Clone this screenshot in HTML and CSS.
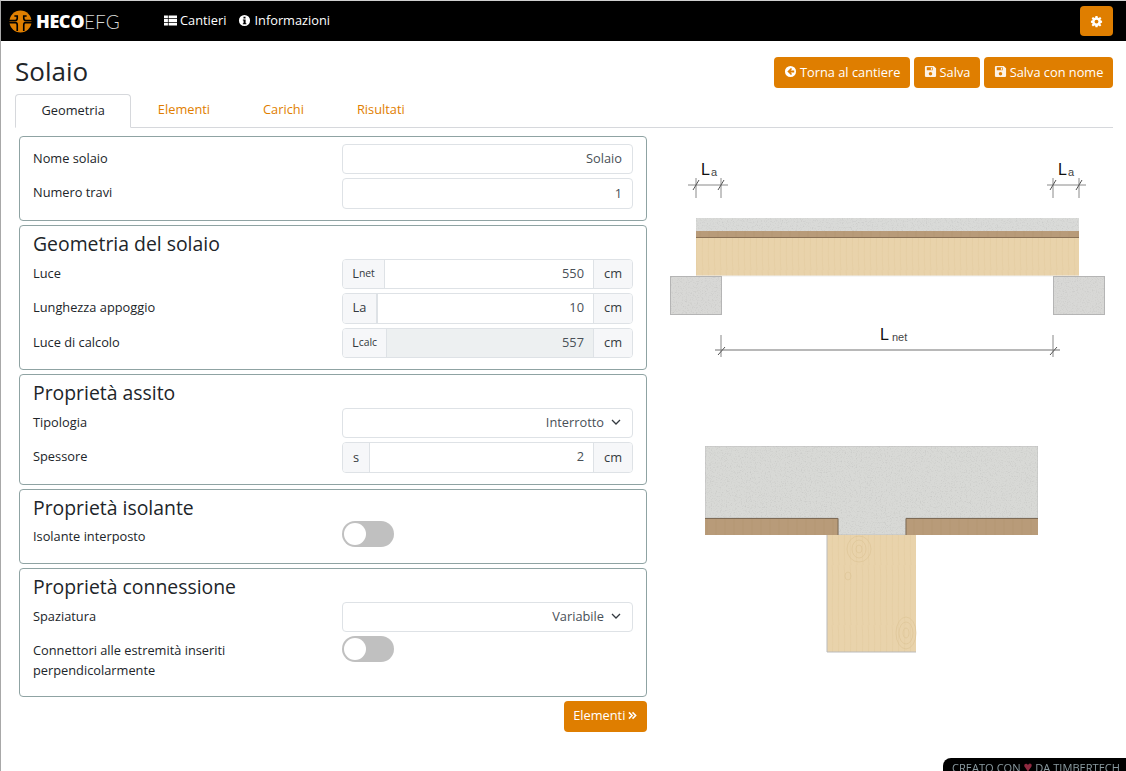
FILE: index.html
```html
<!DOCTYPE html>
<html lang="it">
<head>
    <meta charset="UTF-8">
    <title>Solaio</title>
    <link rel="stylesheet" href="styles.css">
</head>
<body>
    <svg class="defs" width="0" height="0">
        <defs>
            <filter id="grain" x="0" y="0" width="100%" height="100%">
                <feTurbulence type="fractalNoise" baseFrequency="0.8" numOctaves="2" seed="4"/>
                <feColorMatrix values="0 0 0 0 0.45  0 0 0 0 0.45  0 0 0 0 0.45  1.1 0 0 0 -0.55"/>
                <feComposite in2="SourceGraphic" operator="in"/>
                <feMerge><feMergeNode in="SourceGraphic"/><feMergeNode/></feMerge>
            </filter>
            <pattern id="wood" width="6" height="60" patternUnits="userSpaceOnUse">
                <rect width="6" height="60" fill="#e9d3ab"/>
                <path d="M2 0C4 15 1 40 3 60" fill="none" stroke="#e3cba0" stroke-width=".6"/>
            </pattern>
            <pattern id="board" width="9" height="20" patternUnits="userSpaceOnUse">
                <rect width="9" height="20" fill="#b89b79"/>
                <path d="M3 0V20" stroke="#b1936f" stroke-width=".7"/>
            </pattern>
        </defs>
    </svg>

    <nav class="navbar">
        <a class="brand">
            <svg class="logo" viewBox="0 0 24 24">
                <circle cx="12" cy="12" r="11.5" fill="#e07f00"/>
                <path d="M0 11H6.5Q8.6 11 8.6 8.6V6.2H5.6M18.4 6.2H15.4V8.6Q15.4 11 17.5 11H24M0 13.2H6.5Q8.6 13.2 8.6 15.6V22M24 13.2H17.5Q15.4 13.2 15.4 15.6V22" fill="none" stroke="#000" stroke-width="1.7"/>
            </svg>
            <span class="brand-bold">HECO</span><span class="brand-thin">EFG</span>
        </a>
        <a class="nav-link">
            <svg class="icon" viewBox="0 0 14 14"><path d="M0 1.5H4.2V4.6H0ZM5 1.5H14V4.6H5ZM0 5.4H4.2V8.5H0ZM5 5.4H14V8.5H5ZM0 9.3H4.2V12.4H0ZM5 9.3H14V12.4H5Z" fill="#fff"/></svg>
            Cantieri
        </a>
        <a class="nav-link">
            <svg class="icon" viewBox="0 0 14 14"><path fill-rule="evenodd" d="M7 1a6 6 0 1 0 0 12A6 6 0 0 0 7 1ZM5.9 2.9H8.1V4.8H5.9ZM5.2 5.8H8.2V9.9H9V11.1H5.2V9.9H6V7H5.2Z" fill="#fff"/></svg>
            Informazioni
        </a>
        <button class="btn btn-gear">
            <svg class="icon" viewBox="0 0 14 14"><path fill-rule="evenodd" d="M5.9 1H8.1L8.4 2.7 9.4 3.1 10.8 2.1 12.3 3.6 11.2 5 11.7 6 13 6.2V8.3L11.6 8.6 11.2 9.6 12.2 11 10.7 12.4 9.3 11.4 8.4 11.8 8.1 13.2H5.9L5.6 11.7 4.6 11.3 3.2 12.3 1.7 10.9 2.8 9.5 2.3 8.5 1 8.3V6.2L2.4 5.9 2.8 4.9 1.8 3.5 3.3 2.1 4.7 3.1 5.6 2.7ZM7 5A2.1 2.1 0 1 0 7 9.2 2.1 2.1 0 0 0 7 5Z" fill="#fff"/></svg>
        </button>
    </nav>

    <main class="page">
        <div class="title-row">
            <h1>Solaio</h1>
            <div class="actions">
                <button class="btn">
                    <svg class="icon" viewBox="0 0 14 14"><path fill-rule="evenodd" d="M7 1a6 6 0 1 0 0 12A6 6 0 0 0 7 1ZM7.5 3.2 8.7 4.4 7.1 5.9H11V8.1H7.1L8.7 9.6 7.5 10.8 3.6 7Z" fill="#fff"/></svg>
                    Torna al cantiere
                </button>
                <button class="btn">
                    <svg class="icon" viewBox="0 0 14 14"><path fill-rule="evenodd" d="M1 2.2Q1 1 2.2 1H10.4L13 3.6V11.8Q13 13 11.8 13H2.2Q1 13 1 11.8ZM3 2.4V5.6H9.4V2.4ZM7.4 2.9H8.7V5H7.4ZM7 7.6A1.9 1.9 0 1 0 7 11.4 1.9 1.9 0 0 0 7 7.6Z" fill="#fff" opacity=".9"/></svg>
                    Salva
                </button>
                <button class="btn">
                    <svg class="icon" viewBox="0 0 14 14"><path fill-rule="evenodd" d="M1 2.2Q1 1 2.2 1H10.4L13 3.6V11.8Q13 13 11.8 13H2.2Q1 13 1 11.8ZM3 2.4V5.6H9.4V2.4ZM7.4 2.9H8.7V5H7.4ZM7 7.6A1.9 1.9 0 1 0 7 11.4 1.9 1.9 0 0 0 7 7.6Z" fill="#fff" opacity=".9"/></svg>
                    Salva con nome
                </button>
            </div>
        </div>

        <ul class="tabs">
            <li class="tab active">Geometria</li>
            <li class="tab">Elementi</li>
            <li class="tab">Carichi</li>
            <li class="tab">Risultati</li>
        </ul>

        <div class="columns">
            <div class="form-col">
                <section class="card">
                    <div class="row">
                        <label>Nome solaio</label>
                        <div class="field">Solaio</div>
                    </div>
                    <div class="row">
                        <label>Numero travi</label>
                        <div class="field">1</div>
                    </div>
                </section>

                <section class="card">
                    <h2>Geometria del solaio</h2>
                    <div class="row">
                        <label>Luce</label>
                        <div class="group">
                            <span class="addon addon-net">L<sub>net</sub></span>
                            <div class="value">550</div>
                            <span class="addon addon-unit">cm</span>
                        </div>
                    </div>
                    <div class="row">
                        <label>Lunghezza appoggio</label>
                        <div class="group">
                            <span class="addon addon-la">La</span>
                            <div class="value">10</div>
                            <span class="addon addon-unit">cm</span>
                        </div>
                    </div>
                    <div class="row">
                        <label>Luce di calcolo</label>
                        <div class="group">
                            <span class="addon addon-calc">L<sub>calc</sub></span>
                            <div class="value readonly">557</div>
                            <span class="addon addon-unit">cm</span>
                        </div>
                    </div>
                </section>

                <section class="card">
                    <h2>Proprietà assito</h2>
                    <div class="row">
                        <label>Tipologia</label>
                        <div class="field select">
                            Interrotto
                            <svg class="chevron" viewBox="0 0 10 6"><path d="M1 1 5 5 9 1" fill="none" stroke="#343a40" stroke-width="1.3"/></svg>
                        </div>
                    </div>
                    <div class="row">
                        <label>Spessore</label>
                        <div class="group">
                            <span class="addon addon-s">s</span>
                            <div class="value">2</div>
                            <span class="addon addon-unit">cm</span>
                        </div>
                    </div>
                </section>

                <section class="card">
                    <h2>Proprietà isolante</h2>
                    <div class="row row-toggle">
                        <label>Isolante interposto</label>
                        <div class="toggle"></div>
                    </div>
                </section>

                <section class="card">
                    <h2>Proprietà connessione</h2>
                    <div class="row">
                        <label>Spaziatura</label>
                        <div class="field select">
                            Variabile
                            <svg class="chevron" viewBox="0 0 10 6"><path d="M1 1 5 5 9 1" fill="none" stroke="#343a40" stroke-width="1.3"/></svg>
                        </div>
                    </div>
                    <div class="row row-tall">
                        <label class="label-wide">Connettori alle estremità inseriti perpendicolarmente</label>
                        <div class="toggle"></div>
                    </div>
                </section>

                <div class="next">
                    <button class="btn">
                        Elementi
                        <svg class="icon icon-small" viewBox="0 0 10 10"><path d="M1 1.5 4.5 5 1 8.5M5 1.5 8.5 5 5 8.5" fill="none" stroke="#fff" stroke-width="1.7"/></svg>
                    </button>
                </div>
            </div>

            <div class="drawings">
                <svg class="drawing-side" viewBox="0 0 445 220" width="445" height="220">
                    <g fill="none" stroke="#8a8a8a" stroke-width="1">
                        <path d="M18 35H58M26 28V48M51 28V48M377 35H416M383 28V48M409 28V48"/>
                        <path d="M23 40 29 30M48 40 54 30M380 40 386 30M406 40 412 30" stroke="#555"/>
                        <path d="M45 200H390" stroke="#a0a0a0" stroke-width="1.5"/>
                        <path d="M51 185V207M383 185V207" stroke="#888"/>
                        <path d="M48 205 55 197M380 205 387 197" stroke="#555"/>
                    </g>
                    <rect x="26" y="68" width="383" height="13" fill="#d9dad8" filter="url(#grain)"/>
                    <rect x="26" y="81" width="383" height="7" fill="url(#board)"/>
                    <path d="M26 87.5H409" stroke="#8a7155"/>
                    <rect x="26" y="88" width="383" height="38" fill="url(#wood)"/>
                    <path d="M26 126H409" stroke="#eee"/>
                    <rect x="0.5" y="126.5" width="51" height="38" fill="#d8d8d6" stroke="#b5b5b5" filter="url(#grain)"/>
                    <rect x="383.5" y="126.5" width="51" height="38" fill="#d8d8d6" stroke="#b5b5b5" filter="url(#grain)"/>
                    <text class="dim" x="31" y="25">L<tspan class="dim-sub" dx="1" dy="1">a</tspan></text>
                    <text class="dim" x="388" y="25">L<tspan class="dim-sub" dx="1" dy="1">a</tspan></text>
                    <text class="dim" x="210" y="190">L<tspan class="dim-sub" dx="3" dy="1">net</tspan></text>
                </svg>

                <svg class="drawing-section" viewBox="0 0 335 210" width="335" height="210">
                    <path d="M1 1H334V73H202V90H134V73H1Z" fill="#d8d9d6" stroke="#c0c0c0" filter="url(#grain)"/>
                    <rect x="1" y="73" width="133" height="17" fill="url(#board)"/>
                    <rect x="202" y="73" width="132" height="17" fill="url(#board)"/>
                    <path d="M1 73.5H134V90M202 90V73.5H334" fill="none" stroke="#7d6a55"/>
                    <rect x="123" y="90" width="89" height="117" fill="url(#wood)"/>
                    <g fill="none" stroke="#dcc293" stroke-width=".6">
                        <ellipse cx="155" cy="104" rx="3" ry="4"/>
                        <ellipse cx="155" cy="104" rx="7" ry="9"/>
                        <ellipse cx="155" cy="104" rx="12" ry="13"/>
                        <ellipse cx="144" cy="131" rx="3" ry="4"/>
                        <ellipse cx="202" cy="188" rx="3" ry="5"/>
                        <ellipse cx="202" cy="188" rx="7" ry="11"/>
                        <ellipse cx="202" cy="188" rx="10" ry="16"/>
                    </g>
                    <path d="M123 90V207H212" fill="none" stroke="#bbb"/>
                </svg>
            </div>
        </div>
    </main>

    <div class="credit">CREATO CON <span class="heart">♥</span> DA TIMBERTECH</div>
</body>
</html>
```

FILE: styles.css
```css
html, body {
    margin: 0;
    padding: 0;
}

body {
    height: 770px;
    overflow: hidden;
    background-color: #fff;
    color: #212529;
    font-family: "Open Sans", "Liberation Sans", sans-serif;
    font-size: 12.8px;
    border-top: 1px solid #d0d0d0;
    border-left: 1px solid #a8a8a8;
}

.defs {
    position: absolute;
}

.navbar {
    display: flex;
    align-items: center;
    height: 40px;
    padding: 0 13px 0 8px;
    background-color: #000;
    box-sizing: border-box;
}

.brand {
    display: flex;
    align-items: center;
    width: 155px;
    color: #fff;
}

.logo {
    width: 23px;
    height: 23px;
    margin-right: 4px;
}

.brand-bold {
    font-weight: 800;
    font-size: 18px;
    letter-spacing: -0.4px;
}

.brand-thin {
    font-family: "Lato", sans-serif;
    font-weight: 300;
    font-size: 19px;
    color: #d8d8d8;
}

.nav-link {
    display: flex;
    align-items: center;
    gap: 3px;
    margin-right: 12px;
    padding-bottom: 2px;
    color: #fff;
    font-size: 12.8px;
}

.icon {
    width: 13px;
    height: 13px;
    flex: none;
}

.icon-small {
    width: 9px;
    height: 9px;
}

.btn {
    display: inline-flex;
    align-items: center;
    gap: 3px;
    height: 31px;
    padding: 0 9.6px 2px;
    border: none;
    border-radius: 4px;
    background-color: #df7e00;
    color: #fff;
    font-family: inherit;
    font-size: 12.8px;
}

.btn-gear {
    width: 33px;
    height: 30px;
    justify-content: center;
    padding: 0;
    margin-left: auto;
}

.page {
    padding: 0 13px 0 14px;
}

.title-row {
    display: flex;
    justify-content: space-between;
    align-items: flex-start;
    height: 53px;
    padding-top: 16px;
    box-sizing: border-box;
}

h1 {
    margin: 0;
    font-size: 26px;
    font-weight: 400;
    line-height: 28px;
}

.actions {
    display: flex;
    gap: 4px;
}

.tabs {
    display: flex;
    margin: 0;
    padding: 0;
    list-style: none;
    height: 34px;
    border-bottom: 1px solid #d6d8dc;
    box-sizing: border-box;
}

.tab {
    padding: 0 26.5px;
    line-height: 31px;
    color: #df7e00;
}

.tab.active {
    height: 34px;
    padding: 0 25.5px;
    box-sizing: border-box;
    border: 1px solid #d6d8dc;
    border-bottom-color: #fff;
    border-radius: 4px 4px 0 0;
    line-height: 30px;
    color: #212529;
}

.columns {
    display: flex;
    padding-top: 8px;
}

.form-col {
    width: 628px;
    margin-left: 4px;
    display: flex;
    flex-direction: column;
    gap: 4px;
}

.card {
    padding: 7px 13px;
    border: 1px solid #8fa3a3;
    border-radius: 4px;
}

h2 {
    margin: 0 0 5px;
    font-size: 19.4px;
    font-weight: 400;
    line-height: 21px;
}

.row {
    display: grid;
    grid-template-columns: 309px 291px;
    margin-bottom: 4px;
}

.row label {
    line-height: 28px;
}

.row-toggle {
    margin-top: -1.5px;
    min-height: 30.5px;
}

.row-toggle label {
    line-height: 30px;
}

.row-tall {
    min-height: 48.5px;
}

.row .label-wide {
    width: 230px;
    margin-top: 4px;
    line-height: 20px;
}

.field, .group {
    height: 30.4px;
    box-sizing: border-box;
    border: 1px solid #dee2e6;
    border-radius: 4px;
}

.field {
    display: flex;
    align-items: center;
    justify-content: flex-end;
    padding: 0 10px 2px;
    color: #495057;
}

.select {
    gap: 7px;
    padding-right: 11px;
}

.chevron {
    width: 10px;
    height: 6px;
}

.group {
    display: flex;
    overflow: hidden;
}

.addon {
    display: flex;
    align-items: center;
    justify-content: center;
    padding-bottom: 2px;
    background-color: #f6f7f9;
    color: #343a40;
    border-right: 1px solid #dee2e6;
    box-sizing: border-box;
}

.addon sub {
    font-size: 10.4px;
    vertical-align: -2px;
}

.addon-net { width: 42px; }
.addon-calc { width: 44px; }
.addon-la { width: 35px; border-right-width: 2px; }
.addon-s { width: 27px; }

.addon-unit {
    width: 39px;
    margin-left: auto;
    border-right: none;
    border-left: 1px solid #dee2e6;
}

.value {
    flex: 1;
    padding: 0 9px;
    line-height: 27px;
    text-align: right;
    color: #495057;
}

.readonly {
    background-color: #edf0f1;
}

.toggle {
    position: relative;
    width: 52px;
    height: 26px;
    border-radius: 13px;
    background-color: #c0c0c0;
}

.toggle::after {
    content: "";
    position: absolute;
    left: 2px;
    top: 2px;
    width: 22px;
    height: 22px;
    border-radius: 50%;
    background-color: #fff;
}

.next {
    display: flex;
    justify-content: flex-end;
}

.drawings {
    margin-left: 23px;
}

.drawing-side {
    display: block;
    margin-top: 14px;
}

.dim {
    font-family: "Liberation Sans", sans-serif;
    font-size: 16px;
    fill: #111;
}

.dim-sub {
    font-size: 11px;
    fill: #444;
}

.drawing-section {
    display: block;
    margin: 75px 0 0 34px;
}

.credit {
    position: fixed;
    right: 0;
    bottom: -6px;
    width: 183px;
    height: 19px;
    padding-left: 9px;
    box-sizing: border-box;
    background-color: #000;
    border-top-left-radius: 8px;
    color: #8a9aa0;
    font-size: 11.1px;
    line-height: 19px;
    white-space: nowrap;
    overflow: hidden;
}

.heart {
    color: #8f2a40;
    font-size: 15px;
    line-height: 10px;
}
```
